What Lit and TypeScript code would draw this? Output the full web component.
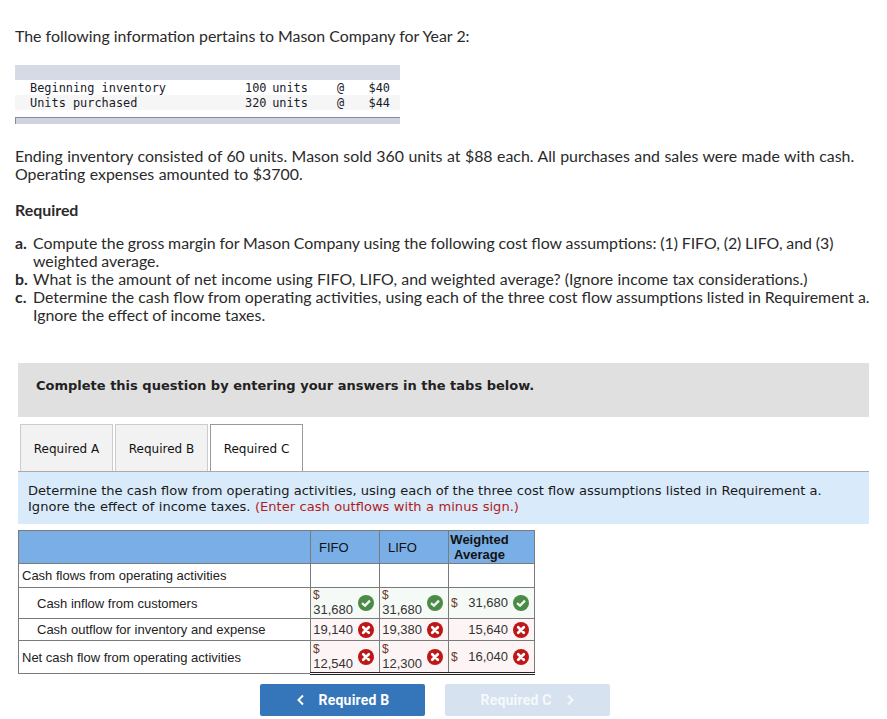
import { LitElement, html, css } from "lit";
import { customElement } from "lit/decorators.js";

const ok = html`<svg class="ic" viewBox="0 0 16 16"><circle cx="8" cy="8" r="8" fill="#4a8b45"/><path d="M4 8.2 7 10.6 12 5.6" fill="none" stroke="#f2f7f2" stroke-width="2.3"/></svg>`;
const bad = html`<svg class="ic" viewBox="0 0 16 16"><circle cx="8" cy="8" r="8" fill="#bd1717"/><path d="M5.2 5.2 10.8 10.8M10.8 5.2 5.2 10.8" fill="none" stroke="#fff" stroke-width="2.7" stroke-linecap="round"/></svg>`;

@customElement("app-root")
export class AppRoot extends LitElement {
  static styles = css`
    :host { display: block; height: 719px; overflow: hidden; background: #fff; font-family: Lato, sans-serif; color: #2a2a2a; font-size: 15.9px; line-height: 18px; }
    .page { padding: 27px 0 0 15px; width: 854px; }
    p { margin: 0; }
    .inv { margin-top: 20px; width: 385px; font: 11.9px/15px "DejaVu Sans Mono", monospace; color: #1a1a2a; }
    .inv .cap { height: 15px; background: #d6dae5; }
    .inv .r { display: grid; grid-template-columns: 215px 92px 14px 1fr; height: 15px; padding: 1px 0 0 15px; box-sizing: border-box; white-space: nowrap; word-spacing: -1.5px; }
    .inv .r span:first-child { word-spacing: 0; }
    .inv .alt { background: #f6f6f6; }
    .inv .amt { text-align: right; padding-right: 10px; }
    .inv .foot { height: 7px; margin-top: 7px; background: #ced3df; border-top: 1px solid #858a96; border-left: 1px solid #858a96; box-sizing: border-box; }
    .p2 { margin-top: 23px; word-spacing: .4px; }
    .req { margin-top: 18px; font-weight: 700; }
    ol { margin: 15px 0 0; padding: 0; list-style: none; width: 865px; }
    li { display: grid; grid-template-columns: 18px 1fr; }
    li b { font-weight: 700; }
    .la { word-spacing: -.3px; }
    .lb2 { word-spacing: .2px; }
    .lc { word-spacing: -.1px; }
    .complete { margin: 39px 0 0 3px; width: 851px; height: 54px; box-sizing: border-box; padding: 0 0 10px 18px; display: flex; align-items: center; background: #e0e0e0; font: 700 13px "DejaVu Sans", sans-serif; color: #222; }
    .tabs { display: flex; gap: 2px; margin: 7px 0 0 5px; height: 47px; }
    .tab { width: 93px; box-sizing: border-box; padding-top: 1px; display: flex; align-items: center; justify-content: center; font: 12px "DejaVu Sans", sans-serif; color: #111; background: #f2f2f2; border: 1px solid #ccc; border-bottom: 0; }
    .tab.on { background: #fff; border-color: #999; }
    .desc { margin-left: 3px; width: 851px; height: 53px; box-sizing: border-box; padding: 11px 10px 0; background: #d9ebfa; border-top: 1px solid #aaa; font: 13.05px/16px "DejaVu Sans", sans-serif; color: #1a1a1a; }
    .desc .l2 { word-spacing: .35px; }
    .desc span { color: #b01c1c; }
    table { margin: 6px 0 0 3px; border-collapse: collapse; table-layout: fixed; width: 516px; font: 13px/15px "Liberation Sans", sans-serif; color: #222; }
    td, th { border: 1px solid #7b7b7b; padding: 0; }
    th { background: #7aaee6; font-weight: 400; height: 32px; line-height: 15px; color: #111; text-align: left; padding-left: 8px; font-size: 13px; }
    th.w { font-weight: 700; text-align: center; padding: 0 24px 0 0; }
    .lb { padding-left: 3px; }
    .in { padding-left: 18px; }
    .r1 td { height: 23px; }
    .r2 td { height: 30px; }
    .r3 td { height: 21px; }
    .r4 td { height: 31px; }
    .g { background: #f6faf6; }
    .x { background: #fdf5f5; }
    .r4 .n { border-top-color: #222; border-bottom: 3px double #222; }
    .cell { position: relative; display: flex; align-items: flex-end; justify-content: flex-end; height: 100%; padding-right: 5px; font-size: 13px; line-height: 14px; box-sizing: border-box; color: #333; }
    .stack { height: 30px; align-items: center; }
    .stack .v { align-self: flex-end; margin-right: auto; padding: 0 0 1px 4px; }
    .d { position: absolute; left: 2px; top: 0; font-size: 12px; color: #6a3a2a; }
    .side { position: absolute; left: 2px; top: 50%; transform: translateY(-50%); font-size: 12px; color: #6a3a2a; }
    .one { align-items: center; }
    .ic { width: 16px; height: 16px; margin-left: 5px; flex: none; }
    .nav { display: flex; gap: 20px; margin: 9px 0 0 245px; }
    .btn { width: 165px; height: 32px; border-radius: 2px; display: flex; align-items: center; justify-content: center; gap: 14px; font: 700 14px Roboto, sans-serif; letter-spacing: .2px; color: #fff; background: #3575b9; }
    .btn.off { background: #d7e2f0; color: #f6f8fb; }
    .btn svg { width: 9px; height: 12px; }
  `;

  private money(v: string, icon: unknown, tint: string) {
    return html`<td class="n ${tint}"><div class="cell stack"><span class="d">$</span><span class="v">${v}</span>${icon}</div></td>`;
  }
  private wa(v: string, icon: unknown, tint: string) {
    return html`<td class="n ${tint}"><div class="cell one"><span class="side">$</span><span>${v}</span>${icon}</div></td>`;
  }
  private plain(v: string, icon: unknown, tint: string) {
    return html`<td class="n ${tint}"><div class="cell one"><span>${v}</span>${icon}</div></td>`;
  }

  render() {
    return html`<div class="page">
      <p>The following information pertains to Mason Company for Year 2:</p>
      <div class="inv">
        <div class="cap"></div>
        <div class="r"><span>Beginning inventory</span><span>100 units</span><span>@</span><span class="amt">$40</span></div>
        <div class="r alt"><span>Units purchased</span><span>320 units</span><span>@</span><span class="amt">$44</span></div>
        <div class="foot"></div>
      </div>
      <p class="p2">Ending inventory consisted of 60 units. Mason sold 360 units at $88 each. All purchases and sales were made with cash. Operating expenses amounted to $3700.</p>
      <p class="req">Required</p>
      <ol>
        <li class="la"><b>a.</b><span>Compute the gross margin for Mason Company using the following cost flow assumptions: (1) FIFO, (2) LIFO, and (3) weighted average.</span></li>
        <li class="lb2"><b>b.</b><span>What is the amount of net income using FIFO, LIFO, and weighted average? (Ignore income tax considerations.)</span></li>
        <li class="lc"><b>c.</b><span>Determine the cash flow from operating activities, using each of the three cost flow assumptions listed in Requirement a. Ignore the effect of income taxes.</span></li>
      </ol>
      <div class="complete">Complete this question by entering your answers in the tabs below.</div>
      <div class="tabs">
        <div class="tab">Required A</div><div class="tab">Required B</div><div class="tab on">Required C</div>
      </div>
      <div class="desc">
        <div>Determine the cash flow from operating activities, using each of the three cost flow assumptions listed in Requirement a.</div>
        <div class="l2">Ignore the effect of income taxes. <span>(Enter cash outflows with a minus sign.)</span></div>
      </div>
      <table>
        <colgroup><col style="width:292px"/><col style="width:69px"/><col style="width:69px"/><col style="width:86px"/></colgroup>
        <tr><th></th><th>FIFO</th><th>LIFO</th><th class="w">Weighted<br/>Average</th></tr>
        <tr class="r1"><td class="lb">Cash flows from operating activities</td><td></td><td></td><td></td></tr>
        <tr class="r2"><td class="in">Cash inflow from customers</td>
          ${this.money("31,680", ok, "g")}${this.money("31,680", ok, "g")}${this.wa("31,680", ok, "g")}</tr>
        <tr class="r3"><td class="in">Cash outflow for inventory and expense</td>
          ${this.plain("19,140", bad, "x")}${this.plain("19,380", bad, "x")}${this.plain("15,640", bad, "x")}</tr>
        <tr class="r4"><td class="lb">Net cash flow from operating activities</td>
          ${this.money("12,540", bad, "x")}${this.money("12,300", bad, "x")}${this.wa("16,040", bad, "x")}</tr>
      </table>
      <div class="nav">
        <div class="btn"><svg viewBox="0 0 9 12"><path d="M7 1.5 2.5 6 7 10.5" fill="none" stroke="currentColor" stroke-width="2"/></svg>Required B</div>
        <div class="btn off">Required C<svg viewBox="0 0 9 12"><path d="M2 1.5 6.5 6 2 10.5" fill="none" stroke="currentColor" stroke-width="2"/></svg></div>
      </div>
    </div>`;
  }
}
